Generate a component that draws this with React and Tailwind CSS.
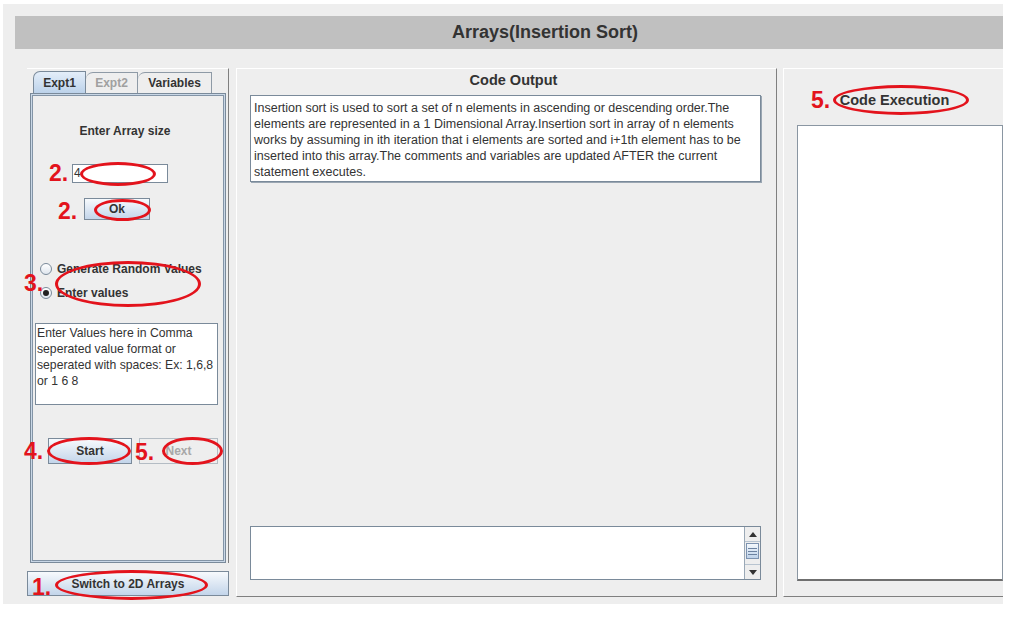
import React from 'react'

const DESCRIPTION =
  'Insertion sort is used to sort a set of n elements in ascending or descending order.The elements are represented in a 1 Dimensional Array.Insertion sort in array of n elements works by assuming in ith iteration that i elements are sorted and i+1th element has to be inserted into this array.The comments and variables are updated AFTER the current statement executes.'

// red markup drawn over the screenshot
const MARKS = [
  { n: '2.', x: 49, y: 161, ex: 80, ey: 162, ew: 76, eh: 24 },
  { n: '2.', x: 58, y: 199, ex: 94, ey: 199, ew: 57, eh: 22 },
  { n: '3.', x: 24, y: 271, ex: 55, ey: 261, ew: 146, eh: 46 },
  { n: '4.', x: 24, y: 439, ex: 47, ey: 437, ew: 84, eh: 28 },
  { n: '5.', x: 135, y: 440, ex: 162, ey: 437, ew: 61, eh: 28 },
  { n: '1.', x: 32, y: 575, ex: 55, ey: 570, ew: 153, eh: 30 },
  { n: '5.', x: 811, y: 88, ex: 833, ey: 85, ew: 136, eh: 30 },
]

function Radio({ checked, label }) {
  return (
    <div className="flex items-center gap-[5px] h-[16px]">
      <span className="w-[12px] h-[12px] rounded-full border border-[#7a8a9a] bg-gradient-to-b from-white to-[#dfe6ee] flex items-center justify-center">
        {checked && <span className="w-[6px] h-[6px] rounded-full bg-[#222]" />}
      </span>
      <span className="text-[12px] font-bold text-[#333]">{label}</span>
    </div>
  )
}

function Scrollbar() {
  return (
    <div className="w-[16px] h-full flex flex-col border-l border-[#9aa8b6] bg-[#eeeeee]">
      <div className="h-[15px] flex items-center justify-center border-b border-[#b8c4d0]">
        <svg width="8" height="5" viewBox="0 0 8 5"><path d="M0 5 L4 0 L8 5 Z" fill="#333" /></svg>
      </div>
      <div className="h-[16px] mx-[1px] mt-[1px] border border-[#7d93b0] bg-gradient-to-b from-[#f4f8fc] to-[#bfd3ea] flex flex-col items-center justify-center gap-[2px]">
        <span className="w-[9px] h-px bg-[#6c82a0]" />
        <span className="w-[9px] h-px bg-[#6c82a0]" />
        <span className="w-[9px] h-px bg-[#6c82a0]" />
      </div>
      <div className="flex-1" />
      <div className="h-[15px] flex items-center justify-center border-t border-[#b8c4d0]">
        <svg width="8" height="5" viewBox="0 0 8 5"><path d="M0 0 L4 5 L8 0 Z" fill="#333" /></svg>
      </div>
    </div>
  )
}

export default function App() {
  return (
    <div
      className="relative w-[1017px] h-[617px] bg-white overflow-hidden text-[#333]"
      style={{ fontFamily: '"Liberation Sans", Arial, sans-serif' }}
    >
      <div className="ml-[3px] mt-[4px] w-[1000px] h-[600px] bg-[#eeeeee] pt-[12px]">
        <div className="ml-[12px] h-[33px] bg-[#c0c0c0] flex items-center justify-center pl-[72px]">
          <span className="text-[18px] font-bold text-[#333]">Arrays(Insertion Sort)</span>
        </div>

        <div className="flex mt-[19px] ml-[24px] h-[529px]">
          {/* left column */}
          <div className="w-[202px] flex flex-col">
            <div className="h-[495px] border-t border-white border-r border-r-[#7f7f7f] pt-[2px]">
              <div className="flex pl-[6px] h-[22px] items-end">
                <div className="w-[53px] h-[22px] border border-b-0 border-[#7a8a9a] rounded-tl-[7px] bg-gradient-to-b from-[#e4eef9] to-[#bcd2ea] flex items-center justify-center text-[12px] font-bold text-[#333]">
                  Expt1
                </div>
                <div className="w-[52px] h-[21px] border border-b-0 border-l-0 border-[#8e9aa6] rounded-tl-[7px] flex items-center justify-center text-[12px] font-bold text-[#a0a0a0]">
                  Expt2
                </div>
                <div className="w-[74px] h-[21px] border border-b-0 border-l-0 border-[#8e9aa6] rounded-tl-[7px] flex items-center justify-center text-[12px] font-bold text-[#333]">
                  Variables
                </div>
              </div>
              <div className="ml-[3px] w-[196px] h-[470px] border border-[#7a8a9a] bg-[#c9d7e6] p-px">
                <div className="h-full border border-[#8394a6] bg-[#eeeeee] pt-[28px]">
                  <div className="text-center text-[12px] font-bold leading-[14px] pr-[6px]">Enter Array size</div>
                  <div className="ml-[39px] mt-[26px] w-[96px] h-[19px] border border-[#7a8a9a] bg-white text-[12px] leading-[17px] pl-[1px]">
                    4
                  </div>
                  <div className="ml-[51px] mt-[15px] w-[66px] h-[22px] border border-[#7a8a9a] bg-gradient-to-b from-[#f7fafd] to-[#c3d5ea] flex items-center justify-center text-[12px] font-bold">
                    Ok
                  </div>
                  <div className="ml-[7px] mt-[41px] flex flex-col gap-[8px]">
                    <Radio label="Generate Random Values" />
                    <Radio checked label="Enter values" />
                  </div>
                  <div className="ml-[2px] mt-[22px] w-[183px] h-[82px] border border-[#7a8a9a] bg-white pl-[1px] pt-[1px] text-[12.2px] leading-[16px] text-[#333]">
                    Enter Values here in Comma seperated value format or seperated with spaces:&nbsp;Ex:&nbsp;1,6,8 or 1 6 8
                  </div>
                  <div className="flex ml-[15px] mt-[33px] gap-[7px]">
                    <div className="w-[84px] h-[26px] border border-[#7a8a9a] bg-gradient-to-b from-[#f7fafd] to-[#c3d5ea] flex items-center justify-center text-[12px] font-bold">
                      Start
                    </div>
                    <div className="w-[79px] h-[26px] border border-[#b4bcc4] flex items-center justify-center text-[12px] font-bold text-[#a8a8a8]">
                      Next
                    </div>
                  </div>
                </div>
              </div>
            </div>
            <div className="mt-[8px] h-[25px] border border-[#7a8a9a] bg-gradient-to-b from-[#f7fafd] to-[#c3d5ea] flex items-center justify-center text-[12px] font-bold">
              Switch to 2D Arrays
            </div>
          </div>

          {/* middle panel */}
          <div className="ml-[7px] w-[541px] h-[529px] border-t border-l border-white border-r border-b border-r-[#7f7f7f] border-b-[#7f7f7f] flex flex-col">
            <div className="text-center text-[14.5px] font-bold leading-[16px] mt-[3px] pl-[14px]">Code Output</div>
            <div className="ml-[13px] mt-[7px] w-[511px] h-[87px] border border-[#7a8a9a] shadow-[1px_1px_0_#9aa6b2] bg-white px-[3px] pt-[4px] text-[12.5px] leading-[16px] text-[#333]">
              {DESCRIPTION}
            </div>
            <div className="flex-1" />
            <div className="ml-[13px] mb-[16px] w-[511px] h-[54px] border border-[#7a8a9a] bg-white flex justify-end">
              <Scrollbar />
            </div>
          </div>

          {/* right panel */}
          <div className="ml-[6px] flex-1 h-[529px] border-t border-l border-white border-b border-b-[#7f7f7f] flex flex-col">
            <div className="text-center text-[14.5px] font-bold leading-[16px] mt-[23px] pl-[2px]">Code Execution</div>
            <div className="ml-[13px] mt-[17px] h-[456px] border border-[#8a96a2] border-b-[#6f6f6f] border-b-2 bg-white" />
          </div>
        </div>
      </div>

      {MARKS.map((m, i) => (
        <React.Fragment key={i}>
          <span
            className="absolute text-[23px] font-bold leading-[24px] text-[#e3131c]"
            style={{ left: m.x, top: m.y }}
          >
            {m.n}
          </span>
          <span
            className="absolute rounded-[50%] border-[3px] border-[#e3131c]"
            style={{ left: m.ex, top: m.ey, width: m.ew, height: m.eh }}
          />
        </React.Fragment>
      ))}
    </div>
  )
}
